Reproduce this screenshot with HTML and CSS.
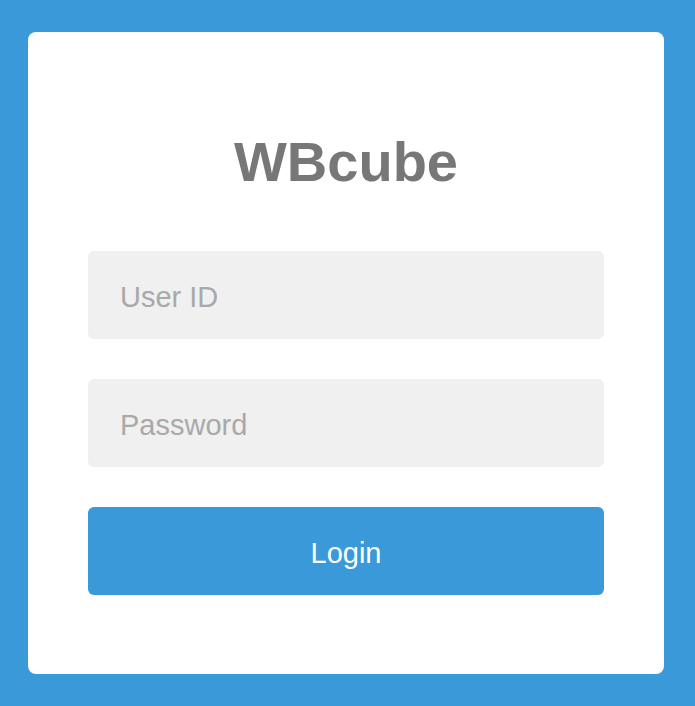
FILE: index.html
```html
<!DOCTYPE html>
<html lang="en">
<head>
<meta charset="utf-8">
<title>WBcube Login</title>
<link rel="stylesheet" href="styles.css">
</head>
<body>
<div class="page">
  <form class="card" onsubmit="return false">
    <h1 class="title">WBcube</h1>
    <div class="fields">
      <input class="field" type="text" placeholder="User ID">
      <input class="field" type="password" placeholder="Password">
      <button class="btn" type="submit">Login</button>
    </div>
  </form>
</div>
</body>
</html>
```
FILE: styles.css
```css
html, body {
  margin: 0;
  padding: 0;
  background: #3a99d8;
  font-family: "Liberation Sans", Arial, sans-serif;
}
.page {
  padding: 32px 31px 32px 28px;
  display: flex;
}
.card {
  box-sizing: border-box;
  width: 636px;
  height: 642px;
  background: #ffffff;
  border-radius: 8px;
  padding: 98px 60px 79px;
  display: flex;
  flex-direction: column;
  margin: 0;
}
.title {
  margin: 0 0 57px;
  text-align: center;
  font-size: 56px;
  line-height: 64px;
  font-weight: 700;
  color: #777777;
}
.fields {
  display: flex;
  flex-direction: column;
  gap: 40px;
}
.field {
  box-sizing: border-box;
  height: 88px;
  width: 100%;
  border: none;
  outline: none;
  border-radius: 6px;
  background: #f0f0f0;
  padding: 4px 32px 0;
  font-family: "Liberation Sans", Arial, sans-serif;
  font-size: 29px;
  color: #555;
  margin: 0;
}
.field::placeholder {
  color: #a9a9a9;
  opacity: 1;
}
.btn {
  box-sizing: border-box;
  height: 88px;
  width: 100%;
  border: none;
  border-radius: 6px;
  background: #3a99d8;
  color: #ffffff;
  font-family: "Liberation Sans", Arial, sans-serif;
  font-size: 29px;
  padding: 4px 0 0;
  margin: 0;
  cursor: pointer;
}
```
